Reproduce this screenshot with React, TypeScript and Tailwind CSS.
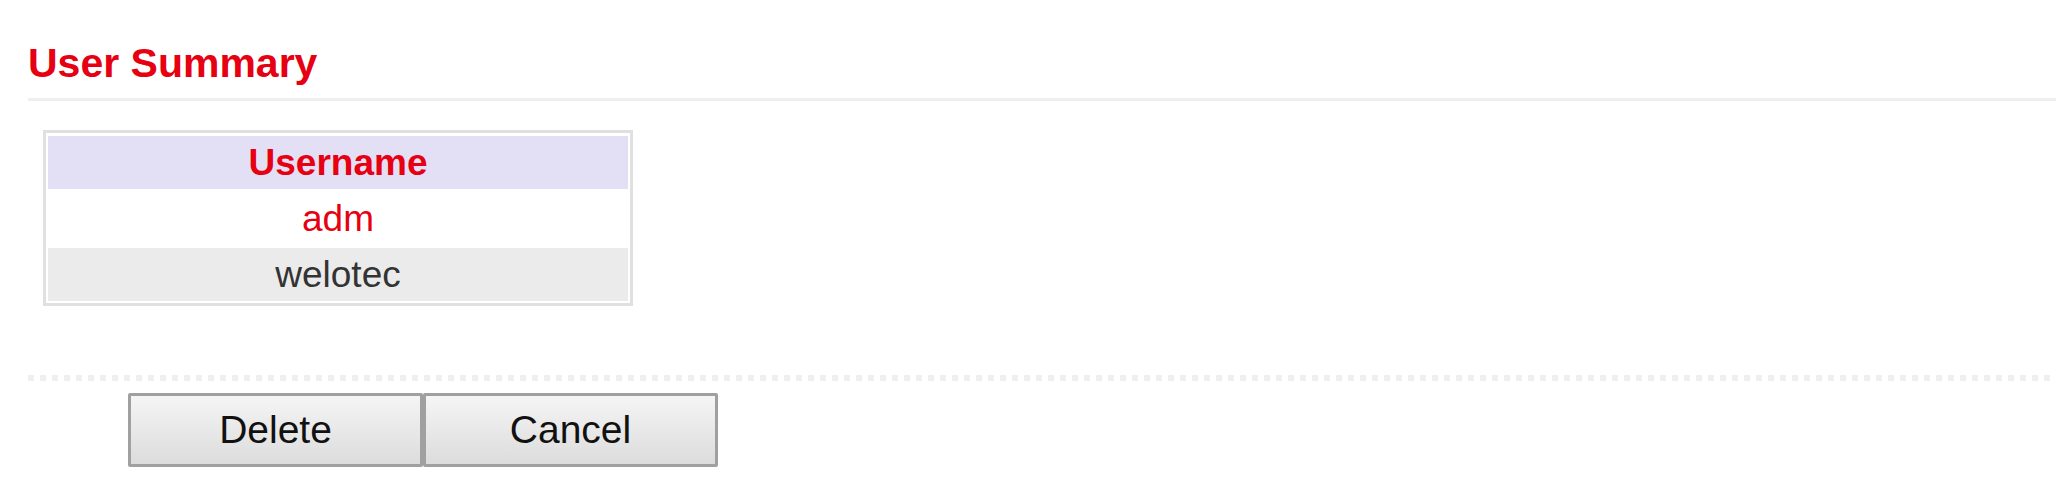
import { useState } from "react";

interface UserRow {
  name: string;
  current: boolean;
}

const users: UserRow[] = [
  { name: "adm", current: true },
  { name: "welotec", current: false },
];

export default function App() {
  const [selected, setSelected] = useState<string | null>(null);

  return (
    <div className="min-h-screen bg-white pl-[28px] font-['Liberation_Sans',Arial,sans-serif]">
      <h2 className="pt-[40px] pb-[11px] text-[41px] leading-[47px] font-bold text-[#e60012] border-b-[3px] border-[#efefef]">
        User Summary
      </h2>

      {/* user list */}
      <div className="ml-[15px] mt-[29px] w-[590px] border-[3px] border-[#e0e0e0] px-[2px] pt-[3px] pb-[2px] flex flex-col gap-[3px]">
        <div className="h-[53px] bg-[#e3dff5] flex items-center justify-center text-[37px] font-bold text-[#e60012]">
          Username
        </div>
        {users.map((u, i) => (
          <div
            key={u.name}
            onClick={() => setSelected(u.name)}
            className={
              "h-[53px] flex items-center justify-center text-[37px] cursor-pointer " +
              (i % 2 === 1 ? "bg-[#ebebeb] " : "bg-white ") +
              (u.current || selected === u.name ? "text-[#e60012]" : "text-[#333333]")
            }
          >
            {u.name}
          </div>
        ))}
      </div>

      <div className="mt-[69px] h-[6px] bg-[linear-gradient(to_right,#efefef_6px,transparent_6px)] bg-[length:12px_6px]" />

      <div className="mt-[12px] ml-[100px] flex">
        <button className="w-[295px] h-[74px] border-[3px] border-[#a0a0a0] rounded-[2px] bg-linear-to-b from-[#f5f5f5] to-[#dcdcdc] text-[39px] text-[#111111]">
          Delete
        </button>
        <button className="w-[295px] h-[74px] border-[3px] border-[#a0a0a0] rounded-[2px] bg-linear-to-b from-[#f5f5f5] to-[#dcdcdc] text-[39px] text-[#111111]">
          Cancel
        </button>
      </div>
    </div>
  );
}
